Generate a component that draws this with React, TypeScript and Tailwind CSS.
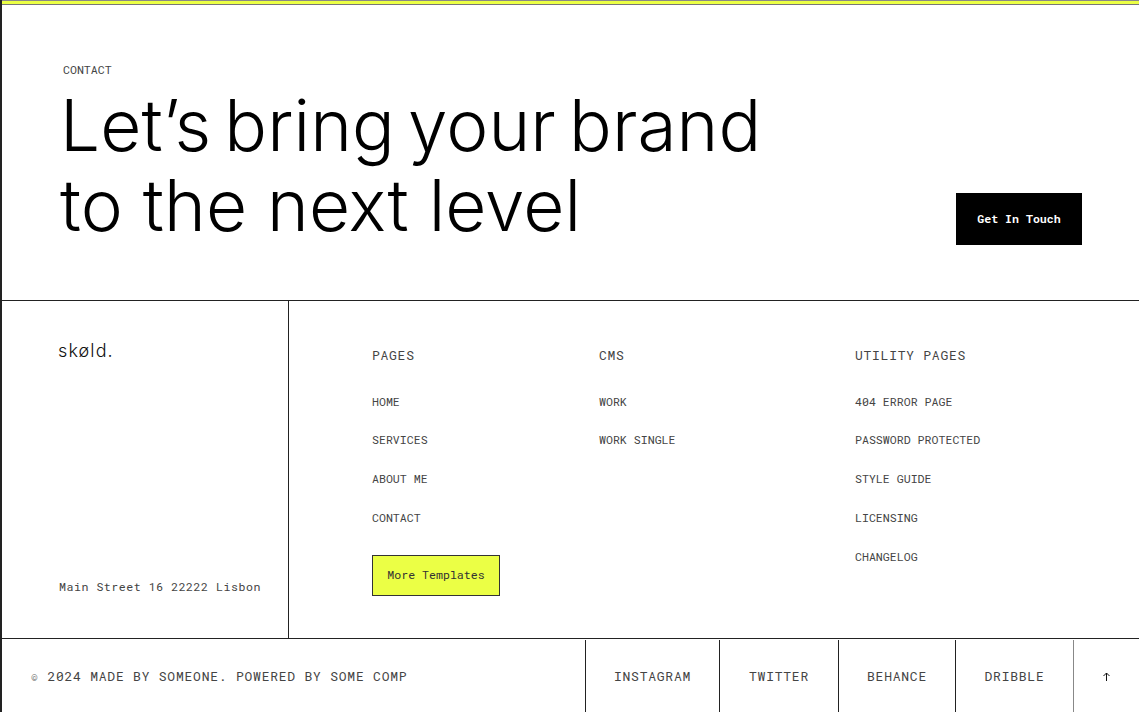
const mono = "font-['Roboto_Mono','Liberation_Mono',monospace]";
function Col({ title, items, className, children }: { title: string; items: string[]; className: string; children?: React.ReactNode }) {
  return (
    <div className={className}>
      <div className="text-[13px] font-normal leading-[20px] tracking-[0.74px] text-[#444]">{title}</div>
      <div className="mt-[26.6px] flex flex-col gap-[18.8px]">
        {items.map((t) => (
          <div key={t} className="text-[11.6px] font-normal leading-[20px] text-[#444]">{t}</div>
        ))}
      </div>
      {children}
    </div>
  );
}
const link = "flex items-center justify-center border-l border-[#222] pt-[2px] text-[13px] font-normal tracking-[0.77px] text-[#444]";
export default function App() {
  return (
    <div className={`h-[712px] w-[1139px] overflow-hidden bg-white border-l-2 border-[#222] ${mono}`}>
      <div className="h-[5px] bg-[#ebff45] border-t border-b border-t-[#888] border-b-[#777]" />
      <div className="flex h-[296px] items-start justify-between border-b border-[#222] pl-[58px] pr-[57px]">
        <div className="pt-[56px]">
          <div className="pl-[3px] text-[11.6px] font-normal leading-[18px] text-[#444]">CONTACT</div>
          <h1 className="mt-[6px] font-['Inter',sans-serif] text-[71px] font-[350] leading-[80px] text-black">
            <span className="block tracking-[0.1px] [word-spacing:-7px]">Let’s bring your brand</span>
            <span className="block tracking-[0.05px]">to the next level</span>
          </h1>
        </div>
        <div className="mt-[188px] flex h-[52px] w-[126px] items-center justify-center bg-black text-[11.6px] font-bold text-white">Get In Touch</div>
      </div>
      <div className="flex h-[338px] border-b border-[#222]">
        <div className="flex w-[287px] flex-col justify-between border-r border-[#222] pb-[41px] pl-[56px] pt-[38px]">
          <div className="font-['Inter',sans-serif] text-[18px] font-light leading-[24px] tracking-[1.1px] text-[#111]">skøld.</div>
          <div className="ml-[1px] text-[11.6px] font-normal leading-[20px] tracking-[0.52px] text-[#444]">Main Street 16 22222 Lisbon</div>
        </div>
        <div className="flex pl-[83px] pt-[44px]">
          <Col title="PAGES" items={["HOME", "SERVICES", "ABOUT ME", "CONTACT"]} className="w-[227px]">
            <div className="mt-[27px] flex h-[41px] w-[128px] items-center justify-center border border-[#333] bg-[#ebff45] pb-[2px] text-[11.6px] font-normal text-[#333]">More Templates</div>
          </Col>
          <Col title="CMS" items={["WORK", "WORK SINGLE"]} className="w-[256px]" />
          <Col title="UTILITY PAGES" items={["404 ERROR PAGE", "PASSWORD PROTECTED", "STYLE GUIDE", "LICENSING", "CHANGELOG"]} className="w-[200px]" />
        </div>
      </div>
      <div className="flex h-[73px] items-stretch pt-[1px]">
        <div className="flex w-[583px] items-center pl-[29px] pt-[2px] text-[13px] font-normal tracking-[0.77px] text-[#444]"><span className="mr-[9px] text-[11px] text-[#666]">©</span>2024 MADE BY SOMEONE. POWERED BY SOME COMP</div>
        <div className={`${link} w-[134px]`}>INSTAGRAM</div>
        <div className={`${link} w-[119px]`}>TWITTER</div>
        <div className={`${link} w-[117px]`}>BEHANCE</div>
        <div className={`${link} w-[118px]`}>DRIBBLE</div>
        <div className="flex w-[66px] items-center justify-center border-l border-[#888]">
          <svg width="7" height="9" viewBox="0 0 7 9" fill="none" stroke="#111" strokeWidth="1"><path d="M3.5 9V1M0.5 4L3.5 1L6.5 4" /></svg>
        </div>
      </div>
    </div>
  );
}
